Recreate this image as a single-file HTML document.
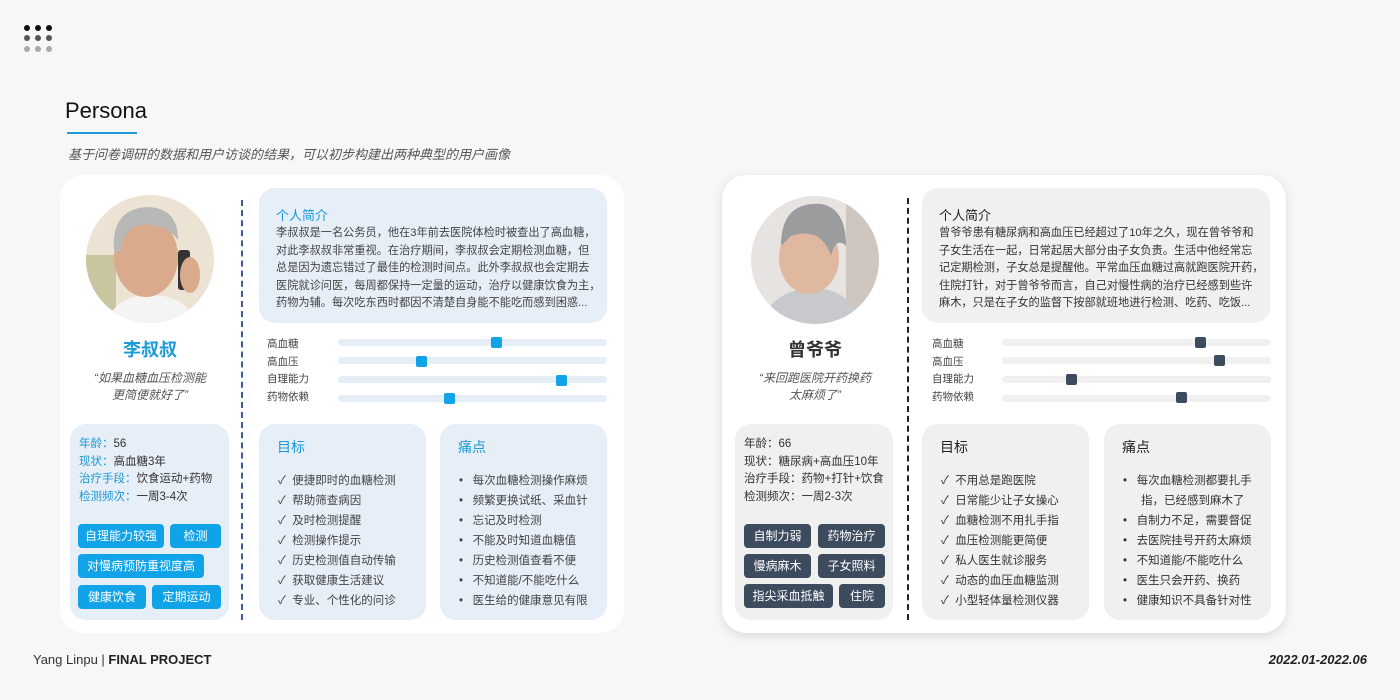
<!DOCTYPE html>
<html><head><meta charset="utf-8"><style>
*{margin:0;padding:0;box-sizing:border-box}
body{width:1400px;height:700px;background:#f7f7f7;position:relative;overflow:hidden;font-family:"Liberation Sans","Noto Sans CJK SC",sans-serif;color:#444}
.a{position:absolute}
.dot{position:absolute;width:6px;height:6px;border-radius:50%}
.card{position:absolute;top:175px;width:564px;height:458px;background:#fff;border-radius:24px}
.box{position:absolute;border-radius:16px}
.t{position:absolute;white-space:nowrap;font-size:11.5px;line-height:17.5px}
.tag{position:absolute;height:24px;border-radius:4px;color:#fff;font-size:12px;line-height:24px;text-align:center}
.track{position:absolute;height:7px;border-radius:4px}
.hd{position:absolute;width:11px;height:11px;border-radius:2px}
.lst div{position:absolute;white-space:nowrap;font-size:11.5px}
</style></head><body>
<div class="dot" style="left:24px;top:25px;background:#111"></div><div class="dot" style="left:35px;top:25px;background:#111"></div><div class="dot" style="left:46px;top:25px;background:#111"></div>
<div class="dot" style="left:24px;top:35px;background:#555"></div><div class="dot" style="left:35px;top:35px;background:#555"></div><div class="dot" style="left:46px;top:35px;background:#555"></div>
<div class="dot" style="left:24px;top:46px;background:#aaa"></div><div class="dot" style="left:35px;top:46px;background:#aaa"></div><div class="dot" style="left:46px;top:46px;background:#aaa"></div>
<div class="a" style="left:65px;top:98px;font-size:22px;color:#111">Persona</div>
<div class="a" style="left:67px;top:132px;width:70px;height:2px;background:#1a9ad6"></div>
<div class="a" style="left:68px;top:144px;font-size:13px;font-style:italic;color:#555">基于问卷调研的数据和用户访谈的结果，可以初步构建出两种典型的用户画像</div>

<div class="card" style="left:60px"></div>
<svg class="a" style="left:86px;top:195px" width="128" height="128" viewBox="0 0 128 128"><defs><clipPath id="c1"><circle cx="64" cy="64" r="64"/></clipPath></defs><g clip-path="url(#c1)"><rect width="128" height="128" fill="#ece3d4"/><rect x="0" y="60" width="30" height="68" fill="#c9c5a0"/><path d="M20 128 Q30 100 64 100 Q100 100 110 128Z" fill="#f4f4f4"/><ellipse cx="60" cy="62" rx="32" ry="40" fill="#d9ab8c"/><path d="M28 55 Q25 15 60 12 Q92 12 92 45 Q80 28 55 30 Q38 32 33 60Z" fill="#b8b8b8"/><rect x="92" y="55" width="12" height="40" rx="3" fill="#333"/><ellipse cx="104" cy="80" rx="10" ry="18" fill="#d9ab8c"/></g></svg>
<div class="a" style="left:60px;top:336px;width:180px;text-align:center;font-size:18px;font-weight:bold;color:#1a9ad6">李叔叔</div>
<div class="a" style="left:60px;top:370px;width:180px;text-align:center;font-size:12px;font-style:italic;color:#555;line-height:17px">“如果血糖血压检测能<br>更简便就好了”</div>
<div class="a" style="left:241px;top:200px;height:420px;border-left:2px dashed #3a5a9a"></div>
<div class="box" style="left:259px;top:188px;width:348px;height:135px;background:#e6eef8"></div>
<div class="a" style="left:276px;top:205px;font-size:13px;color:#1a9ad6">个人简介</div>
<div class="t" style="left:276px;top:225px;color:#444;font-size:11.2px">李叔叔是一名公务员，他在3年前去医院体检时被查出了高血糖，<br>对此李叔叔非常重视。在治疗期间，李叔叔会定期检测血糖，但<br>总是因为遗忘错过了最佳的检测时间点。此外李叔叔也会定期去<br>医院就诊问医，每周都保持一定量的运动，治疗以健康饮食为主，<br>药物为辅。每次吃东西时都因不清楚自身能不能吃而感到困惑...</div>
<div class="t" style="left:267px;top:336px;font-size:10.5px">高血糖<br>高血压<br>自理能力<br>药物依赖</div>
<div class="track" style="left:338px;top:339px;width:269px;background:#e6eef8"></div>
<div class="track" style="left:338px;top:357px;width:269px;background:#e6eef8"></div>
<div class="track" style="left:338px;top:376px;width:269px;background:#e6eef8"></div>
<div class="track" style="left:338px;top:395px;width:269px;background:#e6eef8"></div>
<div class="hd" style="left:491px;top:337px;background:#11a3e8"></div>
<div class="hd" style="left:416px;top:356px;background:#11a3e8"></div>
<div class="hd" style="left:556px;top:375px;background:#11a3e8"></div>
<div class="hd" style="left:444px;top:393px;background:#11a3e8"></div>

<div class="box" style="left:70px;top:424px;width:159px;height:196px;background:#e6eef8"></div>
<div class="t" style="left:79px;top:436px;font-size:11.5px;color:#333"><span style="color:#1a9ad6">年龄：</span>56<br><span style="color:#1a9ad6">现状：</span>高血糖3年<br><span style="color:#1a9ad6">治疗手段：</span>饮食运动+药物<br><span style="color:#1a9ad6">检测频次：</span>一周3-4次</div>
<div class="tag" style="left:78px;top:524px;width:86px;background:#11a3e8">自理能力较强</div>
<div class="tag" style="left:170px;top:524px;width:51px;background:#11a3e8">检测</div>
<div class="tag" style="left:78px;top:554px;width:126px;background:#11a3e8">对慢病预防重视度高</div>
<div class="tag" style="left:78px;top:585px;width:68px;background:#11a3e8">健康饮食</div>
<div class="tag" style="left:152px;top:585px;width:69px;background:#11a3e8">定期运动</div>

<div class="box" style="left:259px;top:424px;width:167px;height:196px;background:#e6eef8"></div>
<div class="a" style="left:277px;top:437px;font-size:14px;color:#1a9ad6">目标</div>
<div class="lst" style="color:#444">
<div style="left:278px;top:472px">✓ &nbsp;便捷即时的血糖检测</div>
<div style="left:278px;top:492px">✓ &nbsp;帮助筛查病因</div>
<div style="left:278px;top:512px">✓ &nbsp;及时检测提醒</div>
<div style="left:278px;top:532px">✓ &nbsp;检测操作提示</div>
<div style="left:278px;top:552px">✓ &nbsp;历史检测值自动传输</div>
<div style="left:278px;top:572px">✓ &nbsp;获取健康生活建议</div>
<div style="left:278px;top:592px">✓ &nbsp;专业、个性化的问诊</div>
</div>
<div class="box" style="left:440px;top:424px;width:167px;height:196px;background:#e6eef8"></div>
<div class="a" style="left:458px;top:437px;font-size:14px;color:#1a9ad6">痛点</div>
<div class="lst" style="color:#444">
<div style="left:459px;top:472px">• &nbsp; 每次血糖检测操作麻烦</div>
<div style="left:459px;top:492px">• &nbsp; 频繁更换试纸、采血针</div>
<div style="left:459px;top:512px">• &nbsp; 忘记及时检测</div>
<div style="left:459px;top:532px">• &nbsp; 不能及时知道血糖值</div>
<div style="left:459px;top:552px">• &nbsp; 历史检测值查看不便</div>
<div style="left:459px;top:572px">• &nbsp; 不知道能/不能吃什么</div>
<div style="left:459px;top:592px">• &nbsp; 医生给的健康意见有限</div>
</div>

<div class="card" style="left:722px;box-shadow:0 3px 10px rgba(0,0,0,0.12)"></div>
<svg class="a" style="left:751px;top:196px" width="128" height="128" viewBox="0 0 128 128"><defs><clipPath id="c2"><circle cx="64" cy="64" r="64"/></clipPath></defs><g clip-path="url(#c2)"><rect width="128" height="128" fill="#e6e3e0"/><rect x="95" y="0" width="33" height="128" fill="#cfc6bf"/><path d="M10 128 Q20 95 60 92 Q100 92 110 128Z" fill="#c8c9cc"/><ellipse cx="58" cy="62" rx="30" ry="36" fill="#e0b8a0"/><path d="M30 50 Q30 5 70 8 Q95 12 95 50 Q85 40 80 60 Q70 30 40 40Z" fill="#9c9c9e"/></g></svg>
<div class="a" style="left:722px;top:336px;width:186px;text-align:center;font-size:18px;font-weight:bold;color:#333">曾爷爷</div>
<div class="a" style="left:722px;top:370px;width:186px;text-align:center;font-size:12px;font-style:italic;color:#555;line-height:17px">“来回跑医院开药换药<br>太麻烦了”</div>
<div class="a" style="left:907px;top:198px;height:422px;border-left:2px dashed #222"></div>
<div class="box" style="left:922px;top:188px;width:348px;height:135px;background:#f0f0f0"></div>
<div class="a" style="left:939px;top:205px;font-size:13px;color:#222">个人简介</div>
<div class="t" style="left:939px;top:225px;color:#333;font-size:11.2px">曾爷爷患有糖尿病和高血压已经超过了10年之久，现在曾爷爷和<br>子女生活在一起，日常起居大部分由子女负责。生活中他经常忘<br>记定期检测，子女总是提醒他。平常血压血糖过高就跑医院开药，<br>住院打针，对于曾爷爷而言，自己对慢性病的治疗已经感到些许<br>麻木，只是在子女的监督下按部就班地进行检测、吃药、吃饭...</div>
<div class="t" style="left:932px;top:336px;font-size:10.5px">高血糖<br>高血压<br>自理能力<br>药物依赖</div>
<div class="track" style="left:1002px;top:339px;width:269px;background:#f0f0f0"></div>
<div class="track" style="left:1002px;top:357px;width:269px;background:#f0f0f0"></div>
<div class="track" style="left:1002px;top:376px;width:269px;background:#f0f0f0"></div>
<div class="track" style="left:1002px;top:395px;width:269px;background:#f0f0f0"></div>
<div class="hd" style="left:1195px;top:337px;background:#3d4b5f"></div>
<div class="hd" style="left:1214px;top:355px;background:#3d4b5f"></div>
<div class="hd" style="left:1066px;top:374px;background:#3d4b5f"></div>
<div class="hd" style="left:1176px;top:392px;background:#3d4b5f"></div>

<div class="box" style="left:735px;top:424px;width:158px;height:196px;background:#f0f0f0"></div>
<div class="t" style="left:744px;top:436px;color:#333">年龄：66<br>现状：糖尿病+高血压10年<br>治疗手段：药物+打针+饮食<br>检测频次：一周2-3次</div>
<div class="tag" style="left:744px;top:524px;width:67px;background:#3d4b5f">自制力弱</div>
<div class="tag" style="left:818px;top:524px;width:67px;background:#3d4b5f">药物治疗</div>
<div class="tag" style="left:744px;top:554px;width:67px;background:#3d4b5f">慢病麻木</div>
<div class="tag" style="left:818px;top:554px;width:67px;background:#3d4b5f">子女照料</div>
<div class="tag" style="left:744px;top:584px;width:89px;background:#3d4b5f">指尖采血抵触</div>
<div class="tag" style="left:839px;top:584px;width:46px;background:#3d4b5f">住院</div>

<div class="box" style="left:922px;top:424px;width:167px;height:196px;background:#f0f0f0"></div>
<div class="a" style="left:940px;top:437px;font-size:14px;color:#222">目标</div>
<div class="lst" style="color:#333">
<div style="left:941px;top:472px">✓ &nbsp;不用总是跑医院</div>
<div style="left:941px;top:492px">✓ &nbsp;日常能少让子女操心</div>
<div style="left:941px;top:512px">✓ &nbsp;血糖检测不用扎手指</div>
<div style="left:941px;top:532px">✓ &nbsp;血压检测能更简便</div>
<div style="left:941px;top:552px">✓ &nbsp;私人医生就诊服务</div>
<div style="left:941px;top:572px">✓ &nbsp;动态的血压血糖监测</div>
<div style="left:941px;top:592px">✓ &nbsp;小型轻体量检测仪器</div>
</div>
<div class="box" style="left:1104px;top:424px;width:167px;height:196px;background:#f0f0f0"></div>
<div class="a" style="left:1122px;top:437px;font-size:14px;color:#222">痛点</div>
<div class="lst" style="color:#333">
<div style="left:1123px;top:472px">• &nbsp; 每次血糖检测都要扎手</div>
<div style="left:1141px;top:492px">指，已经感到麻木了</div>
<div style="left:1123px;top:512px">• &nbsp; 自制力不足，需要督促</div>
<div style="left:1123px;top:532px">• &nbsp; 去医院挂号开药太麻烦</div>
<div style="left:1123px;top:552px">• &nbsp; 不知道能/不能吃什么</div>
<div style="left:1123px;top:572px">• &nbsp; 医生只会开药、换药</div>
<div style="left:1123px;top:592px">• &nbsp; 健康知识不具备针对性</div>
</div>

<div class="a" style="left:33px;top:652px;font-size:13px;color:#333">Yang Linpu | <b style="color:#222">FINAL PROJECT</b></div>
<div class="a" style="right:33px;top:652px;font-size:13px;font-weight:bold;font-style:italic;color:#222">2022.01-2022.06</div>
</body></html>
